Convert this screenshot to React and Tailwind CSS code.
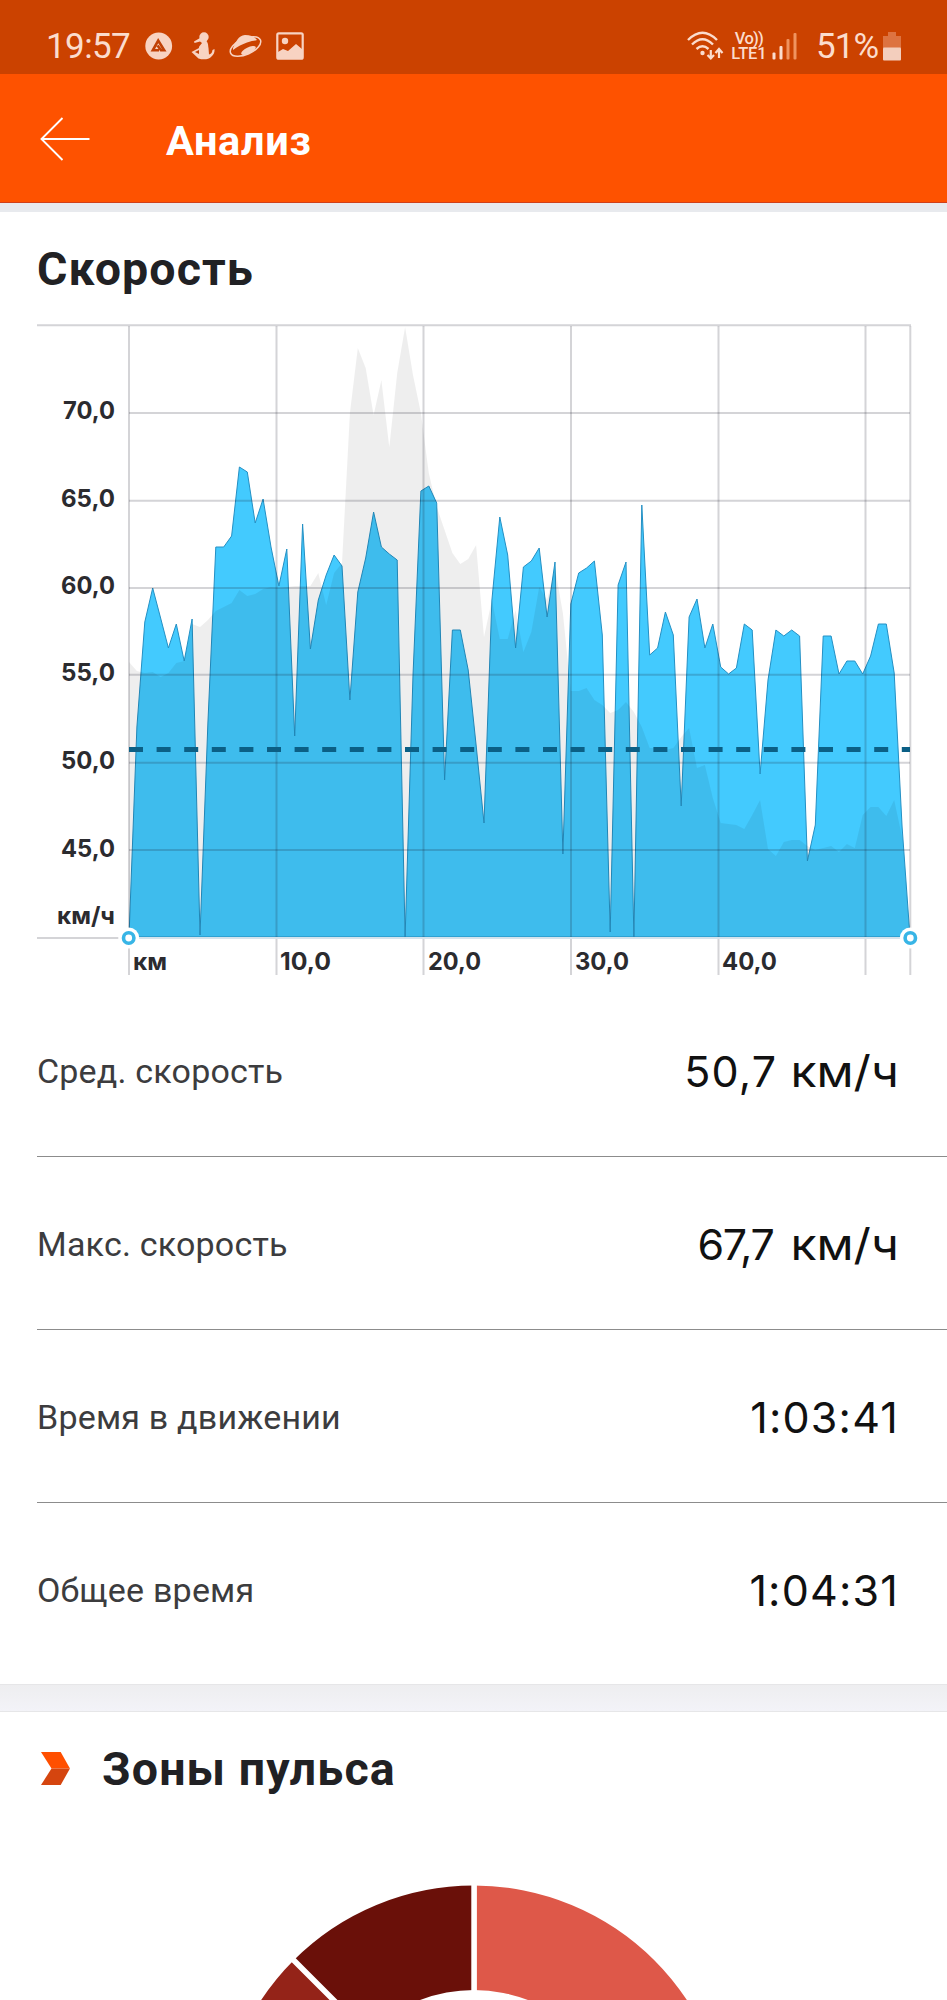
const SPEED = [
  937, 727, 622, 588, 618, 648, 624, 661, 619, 935, 723, 547, 547, 536, 467, 472, 523, 499, 547, 586,
  549, 736, 524, 649, 600, 575, 555, 566, 700, 592, 558, 512, 547, 554, 560, 937, 675, 491, 486, 503,
  780, 630, 630, 670, 745, 823, 600, 517, 555, 648, 567, 561, 548, 617, 562, 854, 604, 573, 568, 561,
  635, 932, 585, 562, 937, 505, 655, 648, 612, 635, 806, 617, 599, 648, 624, 667, 674, 668, 624, 630,
  774, 680, 630, 636, 630, 636, 861, 825, 636, 636, 674, 661, 661, 674, 656, 624, 624, 673, 827, 937,
];

const ELEVATION = [
  662, 671, 673, 672, 677, 673, 663, 661, 624, 627, 620, 611, 607, 603, 590, 596, 594, 589, 587, 588,
  587, 586, 586, 586, 573, 605, 573, 563, 413, 348, 368, 415, 380, 447, 373, 327, 375, 413, 473, 507,
  530, 553, 564, 559, 545, 637, 600, 639, 639, 610, 652, 632, 587, 600, 568, 613, 691, 691, 688, 700,
  705, 713, 710, 702, 712, 727, 748, 748, 750, 748, 737, 728, 768, 765, 798, 823, 824, 825, 829, 815,
  800, 849, 856, 842, 840, 840, 846, 850, 848, 846, 852, 844, 848, 815, 807, 807, 816, 800, 837, 937,
];

const STEP = 781 / 99;

function linePoints(values) {
  return values.map((y, i) => `${(129 + i * STEP).toFixed(1)},${y}`).join(" ");
}

const yLabels = [
  { text: "70,0", x: 63, width: 52, y: 419 },
  { text: "65,0", x: 61, width: 54, y: 506.5 },
  { text: "60,0", x: 61, width: 54, y: 594 },
  { text: "55,0", x: 61, width: 54, y: 681 },
  { text: "50,0", x: 61, width: 54, y: 769 },
  { text: "45,0", x: 61, width: 54, y: 856.5 },
  { text: "км/ч", x: 57, width: 58, y: 924 },
];

const xLabels = [
  { text: "км", x: 133, width: 34 },
  { text: "10,0", x: 280, width: 51 },
  { text: "20,0", x: 428, width: 53 },
  { text: "30,0", x: 575, width: 54 },
  { text: "40,0", x: 722, width: 55 },
];

const stats = [
  { label: "Сред. скорость", value: "50,7", unit: "км/ч", tracking: "mr-[25px] tracking-[1.2px]" },
  { label: "Макс. скорость", value: "67,7", unit: "км/ч", tracking: "mr-[29px] tracking-[-1.5px]" },
  { label: "Время в движении", value: "1:03:41", tracking: "tracking-[1.2px]" },
  { label: "Общее время", value: "1:04:31", tracking: "tracking-[1.2px]" },
];

function StatusBar() {
  return (
    <div className="flex h-[74px] items-center justify-between bg-[#cb4200] pt-[18px] pr-[46px] pl-[46px] text-[#fbdccd]">
      <div className="flex items-center">
        <span className="w-[99px] text-[35px] leading-none tracking-[-0.6px]">19:57</span>
        <svg className="h-[28px] w-[28px]" viewBox="0 0 28 28">
          <circle cx="13.700" cy="14" r="13.400" fill="#f8d3c2" />
          <path d="M14 18.300H7.800L13.200 8.500L19.200 18.300H16L12.500 13.500" fill="none" stroke="#c14005" strokeWidth="2.600" />
        </svg>
        <svg className="ml-[18px] h-[28px] w-[24px]" viewBox="0 0 24 28" fill="#f8d3c2">
          <circle cx="13" cy="5" r="4.700" />
          <path d="M9 6L3 9.500L3.500 11L9 9.500L11 11C8.500 14 7.500 15 8 16L0.500 20L7.500 26.500C12 28 18 27.500 20 25C22.500 23 24 20 23.500 17L21.500 18C21 21 20 22 18 22.500L17.500 16C17 13 17.500 12 15.500 9Z" />
          <path d="M4 20L8 18L8 22Z" fill="#c14005" />
        </svg>
        <svg className="ml-[14px] h-[28px] w-[34px]" viewBox="0 0 34 28">
          <ellipse cx="16.500" cy="14.500" rx="16.300" ry="8" transform="rotate(-24 16.500 14.500)" fill="none" stroke="#f8d3c2" strokeWidth="1.500" />
          <path d="M4 16C7 10 9 3.500 16 3C22 3 26 5 28 8C25 9 22 9 18 10.500C13 12.500 9 14 4 18Z" fill="#f8d3c2" />
          <ellipse cx="19.500" cy="18.500" rx="8" ry="3" transform="rotate(-26 19.500 18.500)" fill="#f8d3c2" />
        </svg>
        <svg className="ml-[13px] h-[28px] w-[28px]" viewBox="0 0 28 28">
          <rect x="1.300" y="1.300" width="25.400" height="25.400" rx="1.500" fill="none" stroke="#f8d3c2" strokeWidth="2.200" />
          <circle cx="9" cy="9" r="3.200" fill="#f8d3c2" />
          <path d="M2 20L7 17L12 19L20 12L26 17V26H2Z" fill="#f8d3c2" />
        </svg>
      </div>
      <div className="flex items-center">
        <svg className="h-[30px] w-[37px]" viewBox="0 0 37 30" fill="none" stroke="#fbdccd" strokeWidth="2.400">
          <path d="M1 9Q15.500 -5.500 30 9" />
          <path d="M5 13.500Q15.500 3 26 13.500" />
          <path d="M9.500 18Q15.500 12.500 21.500 18" />
          <circle cx="15.500" cy="22" r="2.200" fill="#fbdccd" stroke="none" />
          <path d="M23.800 19V27M20.500 24L23.800 27.500L27 24M32 27V19M28.500 22L32 18L35.500 22" strokeWidth="2.200" />
        </svg>
        <div className="ml-[7px] flex w-[36px] flex-col items-center text-[16.5px] leading-[15.5px] font-medium whitespace-nowrap">
          <span className="tracking-[-0.7px]">Vo))</span>
          <span className="tracking-[-0.1px]">LTE1</span>
        </div>
        <svg className="ml-[5px] h-[28px] w-[26px]" viewBox="0 0 26 28">
          <rect x="0.500" y="20.500" width="3" height="7" rx="1" fill="#fbdccd" />
          <rect x="7.500" y="14" width="3" height="13.500" rx="1" fill="#fbdccd" />
          <rect x="14.500" y="7" width="3" height="20.500" rx="1" fill="#f0935f" />
          <rect x="21.500" y="1" width="3" height="26.500" rx="1" fill="#f0935f" />
        </svg>
        <span className="ml-[18px] w-[67px] text-[35px] leading-none tracking-[-0.9px]">51%</span>
        <svg className="h-[30px] w-[18px]" viewBox="0 0 18 30">
          <path d="M5 1H13V5H18V17H0V5H5Z" fill="#dd7341" />
          <rect y="16.500" width="18" height="13" rx="1" fill="#f3cebd" />
        </svg>
      </div>
    </div>
  );
}

function Header() {
  return (
    <div className="flex h-[129px] items-center border-b border-[#d0401a] bg-[#fe5200] pt-[2px] pl-[40px] text-white">
      <svg className="h-[44px] w-[50px]" viewBox="0 0 50 44" fill="none" stroke="white" strokeWidth="1.900">
        <path d="M49.500 22H1.500M22.500 1L1.500 22L22.500 43" />
      </svg>
      <h1 className="mt-[3px] ml-[76px] text-[41.5px] leading-none font-bold tracking-[0.7px]">Анализ</h1>
    </div>
  );
}

function SpeedChart() {
  return (
    <svg className="block h-[669px] w-[947px]" viewBox="0 315 947 669">
      <polygon points={linePoints(SPEED)} fill="#43cafe" stroke="#2490c4" strokeWidth="1" />
      <polygon points={`129,937 ${linePoints(ELEVATION)}`} fill="#000" fillOpacity="0.067" />

      <g stroke="#1c1c2c" strokeOpacity="0.19" strokeWidth="2">
        <path d="M37 325.300H911" />
        {[413, 500.7, 588, 674.7, 762.7, 850].map(y => <path key={y} d={`M129 ${y}H910`} />)}
        {[129, 276.5, 423.5, 571, 718.5, 865.5, 910.3].map(x => <path key={x} d={`M${x} 326V975`} />)}
        <path d="M37 938H129" />
      </g>
      <path d="M129 938H910" stroke="#d5e3ec" strokeWidth="2" />

      <path d="M129 749.500H910" stroke="#0b5f85" strokeWidth="5" strokeDasharray="14 13.600" />

      {[128.7, 910.3].map(x => (
        <g key={x}>
          <circle cx={x} cy="938" r="10.500" fill="white" />
          <circle cx={x} cy="938" r="5.200" fill="white" stroke="#38b5e6" strokeWidth="3.600" />
        </g>
      ))}

      <g className="font-[Inter,sans-serif] text-[24px] font-bold" fill="#2b2b2f">
        {yLabels.map(l => (
          <text key={l.text} x={l.x} y={l.y} textLength={l.width} lengthAdjust="spacingAndGlyphs">{l.text}</text>
        ))}
        {xLabels.map(l => (
          <text key={l.text} x={l.x} y="970" textLength={l.width} lengthAdjust="spacingAndGlyphs">{l.text}</text>
        ))}
      </g>
    </svg>
  );
}

function StatRow({ stat, last }) {
  return (
    <div className={last ? "ml-[37px] flex h-[181px] items-start justify-between pr-[48px]" : "ml-[37px] flex h-[173px] items-start justify-between border-b border-[#8c8c8c] pr-[48px]"}>
      <span className="text-[34px] leading-[174px] tracking-[0.2px] text-[#3c3c3e]">{stat.label}</span>
      <div className="flex font-[Inter,sans-serif] text-[43px] leading-[174px] text-[#111]">
        <span className={stat.tracking}>{stat.value}</span>
        {stat.unit && <span className="origin-right scale-x-[1.12]">{stat.unit}</span>}
      </div>
    </div>
  );
}

function HeartZones() {
  return (
    <div className="h-[289px] overflow-hidden">
      <div className="flex h-[112px] items-center pl-[41px]">
        <svg className="h-[33px] w-[29px]" viewBox="0 0 29 33">
          <path d="M0 0H19.700L29 16.500H10.500Z" fill="#ff4f00" />
          <path d="M10.500 16.500H29L19.700 33H0Z" fill="#d5450f" />
        </svg>
        <h2 className="mt-[2px] ml-[32px] text-[46.5px] leading-none font-bold tracking-[1.1px] text-[#212124]">Зоны пульса</h2>
      </div>
      <svg className="block h-[177px] w-[947px]" viewBox="0 1823 947 177">
        <path d="M474 1884.500A255 255 0 0 1 729 2139.500H624.500A150.500 150.500 0 0 0 474 1989Z" fill="#de5849" />
        <path d="M293.700 1959.200A255 255 0 0 1 474 1884.500V1989A150.500 150.500 0 0 0 367.600 2033.100Z" fill="#6a1009" />
        <path d="M219 2139.500A255 255 0 0 1 293.700 1959.200L367.600 2033.100A150.500 150.500 0 0 0 323.500 2139.500Z" fill="#942318" />
        <path d="M474.100 1880V2000M288 1953.500L372 2037.500" stroke="white" strokeWidth="5.600" />
      </svg>
    </div>
  );
}

function App() {
  return (
    <div className="h-[2000px] w-[947px] overflow-hidden bg-white font-[Roboto,sans-serif]">
      <StatusBar />
      <Header />
      <div className="h-[9px] bg-[#e8eaee]" />
      <h2 className="h-[103px] pl-[37px] text-[46.5px] leading-[115px] font-bold tracking-[1.1px] text-[#212124]">Скорость</h2>
      <SpeedChart />
      {stats.map((s, i) => (
        <StatRow key={s.label} stat={s} last={i === stats.length - 1} />
      ))}
      <div className="h-[28px] border-y border-[#e6e6e8] bg-linear-to-b from-[#eeeef0] to-[#f3f3f8]" />
      <HeartZones />
    </div>
  );
}

export default App;
